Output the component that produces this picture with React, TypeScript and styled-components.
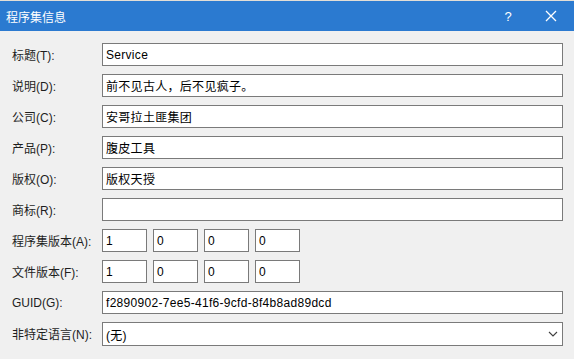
import React from "react";
import styled, { createGlobalStyle } from "styled-components";

const GlobalStyle = createGlobalStyle`
    html, body {
        margin: 0;
        padding: 0;
        background: #f0f0f0;
    }
    body {
        font-family: "Liberation Sans", "Noto Sans CJK SC", sans-serif;
        font-size: 12px;
    }
`;

const Window = styled.div`
    width: 574px;
    height: 359px;
    background: #f0f0f0;
    display: flex;
    flex-direction: column;
    overflow: hidden;
`;

const TitleBar = styled.div`
    height: 30px;
    border-top: 1px solid #e2ded6;
    background: #2b7ad0;
    color: #fff;
    display: flex;
    align-items: center;
    padding-left: 6px;
    font-size: 12px;
`;

const TitleText = styled.div`
    flex: 1;
`;

const TitleButton = styled.div<{ $w: number; $gap?: number }>`
    width: ${(p) => p.$w}px;
    height: 30px;
    margin-right: ${(p) => p.$gap ?? 0}px;
    display: flex;
    align-items: center;
    justify-content: center;
    color: #fff;
    font-size: 13px;
`;

const Form = styled.div`
    display: grid;
    grid-template-columns: 90px 461px;
    grid-auto-rows: 23px;
    row-gap: 8px;
    padding: 12px 0 0 12px;
`;

const Label = styled.label`
    display: flex;
    align-items: center;
    color: #1e1e1e;
    font-size: 12px;
    white-space: nowrap;
`;

const TextBox = styled.div<{ $width?: number }>`
    box-sizing: border-box;
    width: ${(p) => (p.$width ? `${p.$width}px` : "100%")};
    height: 100%;
    border: 1px solid #7a7a7a;
    background: #fff;
    display: flex;
    align-items: center;
    padding-left: 3px;
    color: #000;
    font-size: 12px;
    letter-spacing: 0.3px;
    white-space: nowrap;
    overflow: hidden;
`;

const VersionRow = styled.div`
    display: flex;
    gap: 6px;
`;

const Combo = styled(TextBox)`
    height: 24px;
    justify-content: space-between;
    padding-right: 4px;
`;

const Chevron = () => (
    <svg width="10" height="6" viewBox="0 0 10 6">
        <path d="M1 1 L5 5 L9 1" fill="none" stroke="#404040" strokeWidth="1.1" />
    </svg>
);

const fields: [string, string][] = [
    ["标题(T):", "Service"],
    ["说明(D):", "前不见古人，后不见疯子。"],
    ["公司(C):", "安哥拉土匪集团"],
    ["产品(P):", "腹皮工具"],
    ["版权(O):", "版权天授"],
    ["商标(R):", ""],
];

const versions: [string, string[]][] = [
    ["程序集版本(A):", ["1", "0", "0", "0"]],
    ["文件版本(F):", ["1", "0", "0", "0"]],
];

export default function App() {
    return (
        <>
            <GlobalStyle />
            <Window>
                <TitleBar>
                    <TitleText>程序集信息</TitleText>
                    <TitleButton $w={24} $gap={8}>?</TitleButton>
                    <TitleButton $w={46}>
                        <svg width="12" height="12" viewBox="0 0 12 12">
                            <path d="M1 1 L11 11 M11 1 L1 11" stroke="#fff" strokeWidth="1.3" />
                        </svg>
                    </TitleButton>
                </TitleBar>
                <Form>
                    {fields.map(([label, value]) => (
                        <React.Fragment key={label}>
                            <Label>{label}</Label>
                            <TextBox>{value}</TextBox>
                        </React.Fragment>
                    ))}
                    {versions.map(([label, parts]) => (
                        <React.Fragment key={label}>
                            <Label>{label}</Label>
                            <VersionRow>
                                {parts.map((v, i) => (
                                    <TextBox key={i} $width={45}>{v}</TextBox>
                                ))}
                            </VersionRow>
                        </React.Fragment>
                    ))}
                    <Label>GUID(G):</Label>
                    <TextBox>f2890902-7ee5-41f6-9cfd-8f4b8ad89dcd</TextBox>
                    <Label>非特定语言(N):</Label>
                    <Combo>
                        <span>(无)</span>
                        <Chevron />
                    </Combo>
                </Form>
            </Window>
        </>
    );
}
